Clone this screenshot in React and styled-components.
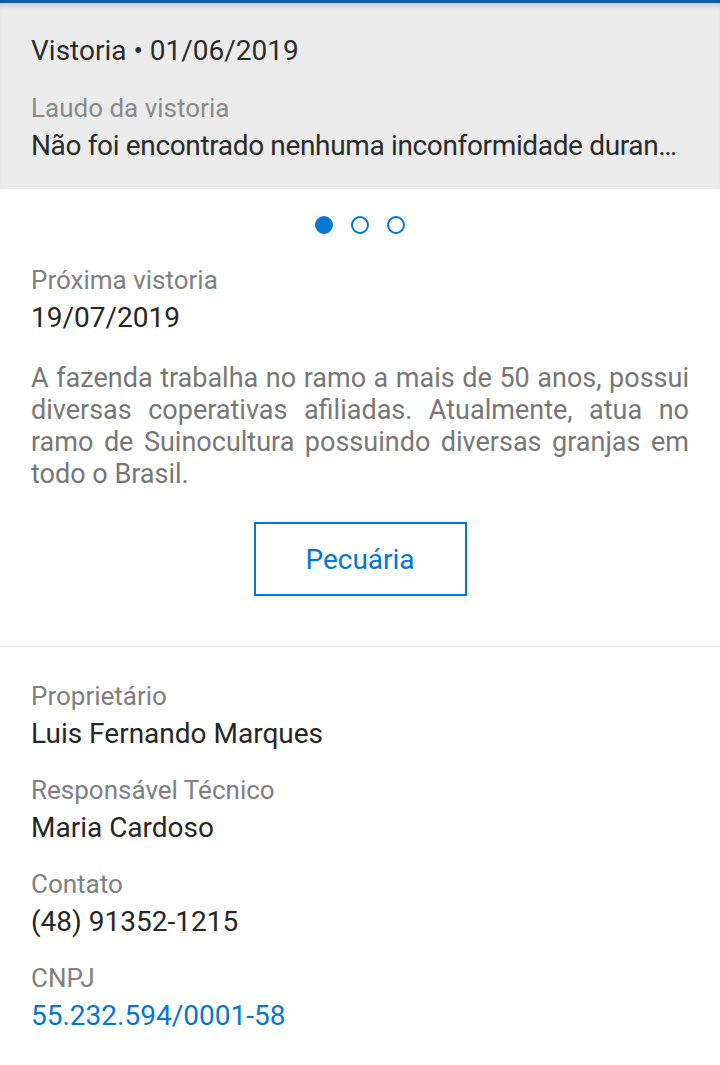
import React from "react";
import styled, { createGlobalStyle } from "styled-components";

const Global = createGlobalStyle`
  html, body { margin: 0; padding: 0; background: #ffffff; }
  body { font-family: Roboto, "Noto Sans", Arial, sans-serif; -webkit-font-smoothing: antialiased; }
  * { box-sizing: border-box; }
`;

const Page = styled.div`
  width: 720px;
  height: 1065px;
  background: #fff;
  overflow: hidden;
  display: flex;
  flex-direction: column;
`;

const Header = styled.div`
  background: #ebebeb;
  border-top: 3px solid #0a5fa8;
  box-shadow: inset 0 6px 6px -4px rgba(0, 0, 0, 0.18);
  padding: 32px 31px 25px;
  height: 189px;
`;

const HeaderTitle = styled.div`
  font-size: 28px;
  line-height: 32px;
  color: #2b2b2b;
`;

const HeaderLabel = styled.div`
  margin-top: 25px;
  font-size: 26px;
  line-height: 32px;
  color: #8a8a8a;
`;

const HeaderText = styled.div`
  margin-top: 6px;
  font-size: 28px;
  line-height: 32px;
  letter-spacing: -0.35px;
  color: #2b2b2b;
  white-space: nowrap;
`;

const Dots = styled.div`
  display: flex;
  justify-content: center;
  gap: 18px;
  margin-top: 27px;
`;

const Dot = styled.span`
  width: 18px;
  height: 18px;
  border-radius: 50%;
  border: 2px solid #0277d3;
  background: ${(p) => (p.$active ? "#0277d3" : "transparent")};
`;

const Body = styled.div`
  padding: 0 31px;
`;

const Field = styled.div`
  display: flex;
  flex-direction: column;
  margin-top: ${(p) => p.$top || 0}px;
`;

const Label = styled.div`
  font-size: 26px;
  line-height: 32px;
  color: #808080;
`;

const Value = styled.div`
  margin-top: 6px;
  font-size: 28px;
  line-height: 32px;
  color: ${(p) => (p.$link ? "#0277d3" : "#262626")};
`;

const Description = styled.p`
  margin: 28px 0 0;
  font-size: 27px;
  line-height: 32px;
  color: #777777;
  text-align: justify;
`;

const ButtonRow = styled.div`
  display: flex;
  justify-content: center;
  margin-top: 32px;
`;

const OutlineButton = styled.button`
  width: 213px;
  height: 74px;
  background: #fff;
  border: 2px solid #0277d3;
  color: #0277d3;
  font-family: inherit;
  font-size: 28px;
  padding: 0;
  cursor: pointer;
`;

const Divider = styled.hr`
  margin: 50px 0 0;
  border: 0;
  border-top: 1px solid #e6e6e6;
`;

const Details = styled.div`
  padding: 33px 31px 0;
  display: flex;
  flex-direction: column;
`;

export default function App() {
  const people = [
    { label: "Proprietário", value: "Luis Fernando Marques" },
    { label: "Responsável Técnico", value: "Maria Cardoso" },
    { label: "Contato", value: "(48) 91352-1215" },
    { label: "CNPJ", value: "55.232.594/0001-58", link: true },
  ];
  return (
    <Page>
      <Global />
      <Header>
        <HeaderTitle>Vistoria • 01/06/2019</HeaderTitle>
        <HeaderLabel>Laudo da vistoria</HeaderLabel>
        <HeaderText>Não foi encontrado nenhuma inconformidade duran…</HeaderText>
      </Header>
      <Dots>
        <Dot $active />
        <Dot />
        <Dot />
      </Dots>
      <Body>
        <Field $top={30}>
          <Label>Próxima vistoria</Label>
          <Value>19/07/2019</Value>
        </Field>
        <Description>
          A fazenda trabalha no ramo a mais de 50 anos, possui diversas coperativas afiliadas.
          Atualmente, atua no ramo de Suinocultura possuindo diversas granjas em todo o Brasil.
        </Description>
        <ButtonRow>
          <OutlineButton>Pecuária</OutlineButton>
        </ButtonRow>
      </Body>
      <Divider />
      <Details>
        {people.map((p, i) => (
          <Field key={p.label} $top={i === 0 ? 0 : 24}>
            <Label>{p.label}</Label>
            <Value $link={p.link}>{p.value}</Value>
          </Field>
        ))}
      </Details>
    </Page>
  );
}
